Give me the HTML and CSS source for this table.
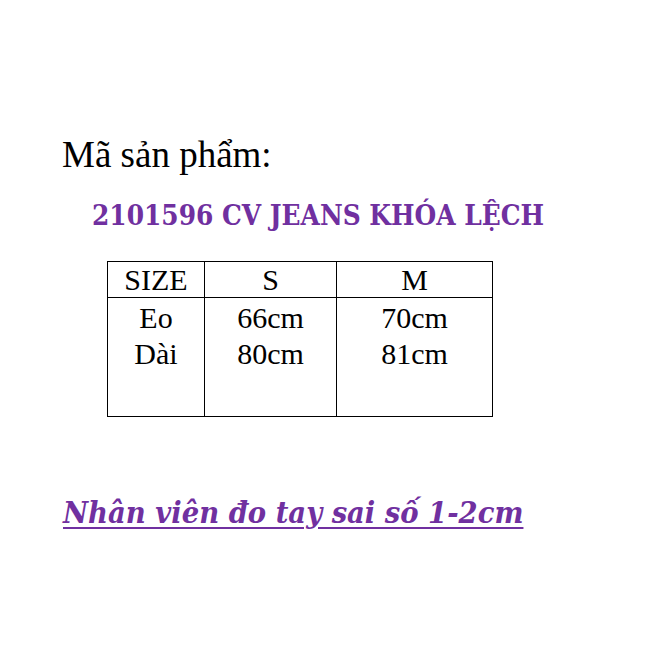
FILE: index.html
```html
<!DOCTYPE html>
<html lang="vi">
<head>
<meta charset="utf-8">
<link rel="stylesheet" href="styles.css">
</head>
<body>
<div class="page">
  <div class="label">Mã sản phẩm:</div>
  <div class="code">2101596 CV JEANS KHÓA LỆCH</div>
  <table class="sizes">
    <tr class="head">
      <td class="c1">SIZE</td>
      <td class="c2">S</td>
      <td class="c3">M</td>
    </tr>
    <tr class="body">
      <td>Eo<br>Dài</td>
      <td>66cm<br>80cm</td>
      <td>70cm<br>81cm</td>
    </tr>
  </table>
  <div class="note">Nhân viên đo tay sai số 1-2cm</div>
</div>
</body>
</html>
```
FILE: styles.css
```css
html, body {
  margin: 0;
  padding: 0;
  background: #fff;
}
.page {
  width: 667px;
  height: 667px;
  display: flex;
  flex-direction: column;
  align-items: flex-start;
  padding: 133px 0 0 62px;
  box-sizing: border-box;
  color: #000;
}
.label {
  font-family: "Liberation Serif", serif;
  font-size: 37px;
  line-height: 44px;
}
.code {
  margin: 23px 0 0 30px;
  font-family: "DejaVu Serif Condensed", "Liberation Serif", serif;
  font-weight: bold;
  font-size: 27.7px;
  line-height: 32px;
  color: #7030a0;
}
.sizes {
  margin: 29px 0 0 45px;
  border-collapse: collapse;
  font-family: "Liberation Serif", serif;
  font-size: 30px;
  line-height: 36px;
}
.sizes td {
  border: 1px solid #000;
  text-align: center;
  vertical-align: top;
  padding: 0;
}
.sizes .c1 { width: 96px; }
.sizes .c2 { width: 131px; }
.sizes .c3 { width: 155px; }
.sizes .head td { height: 35px; line-height: 35px; }
.sizes .body td { height: 119px; padding-top: 2px; box-sizing: border-box; }
.note {
  margin: 75px 0 0 1px;
  font-family: "DejaVu Serif Condensed", "Liberation Serif", serif;
  font-style: italic;
  font-weight: bold;
  font-size: 30.5px;
  line-height: 40px;
  color: #7030a0;
  text-decoration: underline;
  text-decoration-thickness: 2px;
  text-underline-offset: 4px;
}
```
